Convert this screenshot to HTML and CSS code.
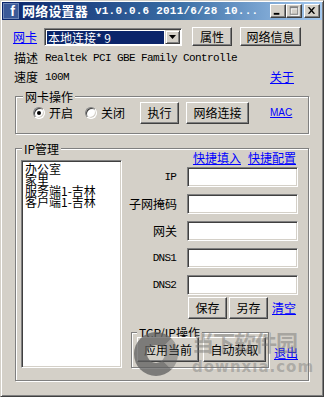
FILE: index.html
```html
<!DOCTYPE html>
<html lang="zh-CN">
<head>
<meta charset="utf-8">
<title>网络设置器</title>
<link rel="stylesheet" href="styles.css">
</head>
<body>
<div class="window">
  <div class="titlebar">
    <span class="appicon">f</span>
    <span class="title-cn">网络设置器</span>
    <span class="title-ver">v1.0.0.6 2011/6/28 10...</span>
    <span class="tb-btns">
      <span class="tb-btn"><svg width="16" height="14" viewBox="0 0 16 14"><rect x="4" y="9" width="6" height="2" fill="#000"/></svg></span>
      <span class="tb-btn"><svg width="16" height="14" viewBox="0 0 16 14"><path d="M5 3h9v9H5z M6 5h7v6H6z" fill="#fff" fill-rule="evenodd"/><path d="M4 2h9v9H4z M5 4h7v6H5z" fill="#808080" fill-rule="evenodd"/></svg></span>
      <span class="tb-btn tb-close"><svg width="16" height="14" viewBox="0 0 16 14"><path d="M4 3l2 0 2 2.5 2-2.5 2 0-3 3.5 3 3.5-2 0-2-2.5-2 2.5-2 0 3-3.5z" fill="#000"/></svg></span>
    </span>
  </div>

  <div class="row1">
    <a class="link nic-link">网卡</a>
    <div class="combo">
      <div class="combo-sel">本地连接* 9</div>
      <div class="combo-btn"><svg width="7" height="4" viewBox="0 0 7 4"><path d="M0 0h7L3.5 4z" fill="#000"/></svg></div>
    </div>
    <button class="btn btn-prop">属性</button>
    <button class="btn btn-netinfo">网络信息</button>
  </div>

  <div class="inforow r2">
    <span class="info-label">描述</span>
    <span class="mono">Realtek PCI GBE Family Controlle</span>
  </div>
  <div class="inforow r3">
    <span class="info-label">速度</span>
    <span class="mono">100M</span>
    <a class="link about">关于</a>
  </div>

  <fieldset class="group g-nic">
    <legend>网卡操作</legend>
    <div class="opsrow">
      <span class="radio checked"></span><span class="rtext">开启</span>
      <span class="radio r-off"></span><span class="rtext">关闭</span>
      <button class="btn btn-exec">执行</button>
      <button class="btn btn-netconn">网络连接</button>
      <a class="link mac">MAC</a>
    </div>
  </fieldset>

  <fieldset class="group g-ip">
    <legend>IP管理</legend>
    <div class="ipbody">
      <div class="listbox">
        <div>办公室</div>
        <div>家里</div>
        <div>服务端1-吉林</div>
        <div>客户端1-吉林</div>
      </div>
      <div class="ipright">
        <div class="quick">
          <a class="link">快捷填入</a>
          <a class="link">快捷配置</a>
        </div>
        <div class="fields">
          <span class="flabel mono">IP</span><span class="field"></span>
          <span class="flabel">子网掩码</span><span class="field"></span>
          <span class="flabel">网关</span><span class="field"></span>
          <span class="flabel mono">DNS1</span><span class="field"></span>
          <span class="flabel mono">DNS2</span><span class="field"></span>
        </div>
        <div class="saverow">
          <button class="btn btn-save">保存</button>
          <button class="btn btn-saveas">另存</button>
          <a class="link clear">清空</a>
        </div>
        <div class="tcprow">
          <fieldset class="group g-tcp">
            <legend>TCP/IP操作</legend>
            <div class="tcpbtns">
              <button class="btn btn-apply">应用当前</button>
              <button class="btn btn-auto">自动获取</button>
            </div>
          </fieldset>
          <a class="link quit">退出</a>
        </div>
      </div>
    </div>
  </fieldset>

  <div class="watermark">
    <span class="wm-logo"></span>
    <span class="wm-cn">当下软件园</span>
    <span class="wm-en">downxia.com</span>
  </div>
</div>
</body>
</html>
```

FILE: styles.css
```css
html, body {
  margin: 0;
  padding: 0;
  background: #d4d0c8;
}
body {
  font-family: "Noto Sans CJK SC", "Noto Sans", sans-serif;
  font-size: 12px;
  color: #000;
}
.window {
  position: relative;
  width: 324px;
  height: 397px;
  box-sizing: border-box;
  border: 1px solid;
  border-color: #d4d0c8 #404040 #404040 #d4d0c8;
  box-shadow: inset 1px 1px #fff, inset -1px -1px #808080;
  padding: 1px;
  background: #d4d0c8;
  overflow: hidden;
}

/* title bar */
.titlebar {
  height: 18px;
  display: flex;
  align-items: center;
  padding-left: 1px;
  background: linear-gradient(to right, #0a246a 0%, #3a6ea5 55%, #a6caf0 100%);
  color: #fff;
}
.appicon {
  width: 16px;
  height: 16px;
  box-sizing: border-box;
  background: #3b5998;
  border: 1px solid #6d84b4;
  color: #fff;
  font: bold 14px/15px "Liberation Sans", sans-serif;
  text-align: right;
  padding-right: 3px;
}
.title-cn {
  margin-left: 3px;
  font: bold 13px/18px "Noto Sans CJK SC", sans-serif;
  letter-spacing: 0.2px;
}
.title-ver {
  margin-left: 7px;
  font: bold 11px/18px "Liberation Mono", monospace;
  letter-spacing: 0.2px;
  white-space: nowrap;
}
.tb-btns {
  margin-left: auto;
  display: flex;
  margin-right: 2px;
}
.tb-btn {
  width: 16px;
  height: 14px;
  box-sizing: border-box;
  background: #d4d0c8;
  border: 1px solid;
  border-color: #fff #404040 #404040 #fff;
  box-shadow: inset -1px -1px #808080;
  display: flex;
}
.tb-btn svg { margin: -1px 0 0 -1px; }
.tb-close { margin-left: 2px; }

/* common */
.link {
  color: #0000ff;
  text-decoration: underline;
  cursor: pointer;
  white-space: nowrap;
}
.mono {
  font-family: "Liberation Mono", monospace;
  font-size: 11px;
  letter-spacing: -0.6px;
}
.btn {
  box-sizing: border-box;
  padding: 0;
  margin: 0;
  background: #d4d0c8;
  border: 1px solid;
  border-color: #fff #404040 #404040 #fff;
  box-shadow: inset -1px -1px #808080;
  font-family: "Noto Sans CJK SC", sans-serif;
  font-size: 12px;
  color: #000;
  line-height: 1;
}

/* row 1 */
.row1 {
  display: flex;
  align-items: center;
  height: 19px;
  margin-top: 7px;
  padding-left: 11px;
}
.nic-link { width: 24px; line-height: 16px; }
.combo {
  margin-left: 7px;
  width: 138px;
  height: 18px;
  box-sizing: border-box;
  border: 1px solid;
  border-color: #808080 #fff #fff #808080;
  box-shadow: inset 1px 1px #404040;
  background: #fff;
  display: flex;
  padding: 2px 1px 1px 2px;
}
.combo-sel {
  flex: 1;
  background: #0a246a;
  color: #fff;
  line-height: 13px;
  padding-left: 1px;
  margin-right: 1px;
  white-space: pre;
}
.combo-btn {
  width: 15px;
  box-sizing: border-box;
  margin-top: -1px;
  background: #d4d0c8;
  border: 1px solid;
  border-color: #d4d0c8 #404040 #404040 #d4d0c8;
  box-shadow: inset 1px 1px #fff, inset -1px -1px #808080;
  display: flex;
  align-items: center;
  justify-content: center;
}
.btn-prop { margin-left: 10px; width: 40px; height: 19px; }
.btn-netinfo { margin-left: 8px; width: 61px; height: 19px; }

/* info rows */
.inforow {
  display: flex;
  height: 16px;
  line-height: 16px;
  padding-left: 12px;
  white-space: nowrap;
}
.inforow.r2 { margin-top: 4px; }
.inforow.r3 { margin-top: 3px; }
.info-label { width: 31px; }
.about { margin-left: auto; margin-right: 28px; }

/* group boxes */
.group {
  margin: 0;
  padding: 0;
  min-inline-size: 0;
  box-sizing: border-box;
  border: 1px solid #808080;
  box-shadow: inset 1px 1px #fff, 1px 1px #fff;
}
.group legend {
  padding: 0 2px;
  margin-left: 7px;
  line-height: 13px;
  font-size: 12px;
  background: #d4d0c8;
}
.g-nic {
  margin: 5px 0 0 13px;
  width: 294px;
  padding-bottom: 9px;
}
.opsrow {
  display: flex;
  align-items: center;
  margin-top: -1px;
  height: 22px;
  padding-left: 17px;
}
.radio {
  position: relative;
  width: 12px;
  height: 12px;
  box-sizing: border-box;
  border-radius: 50%;
  background: #fff;
  border: 1px solid;
  border-color: #808080 #fff #fff #808080;
  box-shadow: inset 1px 1px #404040, inset -1px -1px #d4d0c8;
  flex: none;
}
.radio.checked::after {
  content: "";
  position: absolute;
  left: 3px;
  top: 3px;
  width: 4px;
  height: 4px;
  border-radius: 50%;
  background: #000;
}
.rtext { margin-left: 4px; line-height: 16px; }
.r-off { margin-left: 12px; }
.btn-exec { margin-left: 15px; width: 39px; height: 22px; }
.btn-netconn { margin-left: 7px; width: 63px; height: 22px; }
.mac {
  margin-left: 21px;
  font: 10px/14px "Liberation Sans", sans-serif;
}

/* IP group */
.g-ip {
  margin: 8px 0 0 13px;
  width: 294px;
  padding-bottom: 12px;
}
.g-ip > legend { margin-left: 6px; }
.ipbody {
  display: flex;
  align-items: flex-start;
  padding-left: 5px;
}
.listbox {
  margin-top: 5px;
  width: 101px;
  height: 208px;
  box-sizing: border-box;
  background: #fff;
  border: 1px solid;
  border-color: #808080 #fff #fff #808080;
  box-shadow: inset 1px 1px #404040, inset -1px -1px #d4d0c8;
  padding: 2px 0 0 3px;
  line-height: 11px;
  white-space: nowrap;
}
.ipright {
  width: 176px;
  margin-top: -4px;
}
.quick {
  display: flex;
  justify-content: flex-end;
  gap: 7px;
  padding-right: 2px;
  line-height: 14px;
}
.fields {
  margin-top: 2px;
  display: grid;
  grid-template-columns: 55px 111px;
  grid-auto-rows: 20px;
  column-gap: 10px;
  row-gap: 7px;
}
.flabel {
  align-self: center;
  text-align: right;
  line-height: 14px;
}
.flabel.mono { letter-spacing: -0.8px; padding-right: 1px; }
.field {
  box-sizing: border-box;
  background: #fff;
  border: 1px solid;
  border-color: #808080 #fff #fff #808080;
  box-shadow: inset 1px 1px #404040, inset -1px -1px #d4d0c8;
}
.saverow {
  margin-top: 2px;
  display: flex;
  align-items: center;
}
.btn-save { margin-left: 66px; width: 39px; height: 22px; }
.btn-saveas { margin-left: 2px; width: 39px; height: 22px; }
.clear { margin-left: 4px; line-height: 14px; }
.tcprow {
  margin-top: 7px;
  display: flex;
  align-items: flex-end;
}
.g-tcp {
  margin: 0 0 0 9px;
  width: 140px;
  padding-bottom: 5px;
}
.g-tcp > legend { margin-left: 5px; }
.tcpbtns {
  display: flex;
  margin-top: -2px;
  padding-left: 5px;
}
.btn-apply { width: 62px; height: 25px; }
.btn-auto { margin-left: 4px; width: 63px; height: 25px; }
.quit { margin-left: 5px; margin-bottom: 8px; line-height: 14px; }

/* watermark overlay */
.watermark {
  position: absolute;
  left: 133px;
  top: 327px;
  width: 170px;
  height: 55px;
  pointer-events: none;
}
.wm-logo {
  position: absolute;
  left: 0;
  top: 4px;
  width: 44px;
  height: 44px;
  box-sizing: border-box;
  border-radius: 50%;
  border: 13px solid rgba(95, 95, 95, 0.75);
  border-right-color: rgba(95, 95, 95, 0.45);
}
.wm-cn {
  position: absolute;
  left: 58px;
  top: 0;
  font: bold 22px/26px "Noto Sans CJK SC", sans-serif;
  color: rgba(110, 110, 110, 0.45);
  letter-spacing: -1px;
}
.wm-en {
  position: absolute;
  left: 58px;
  top: 30px;
  font: bold 15px/18px "DejaVu Sans", sans-serif;
  color: rgba(110, 110, 110, 0.4);
  letter-spacing: 1px;
}
```
